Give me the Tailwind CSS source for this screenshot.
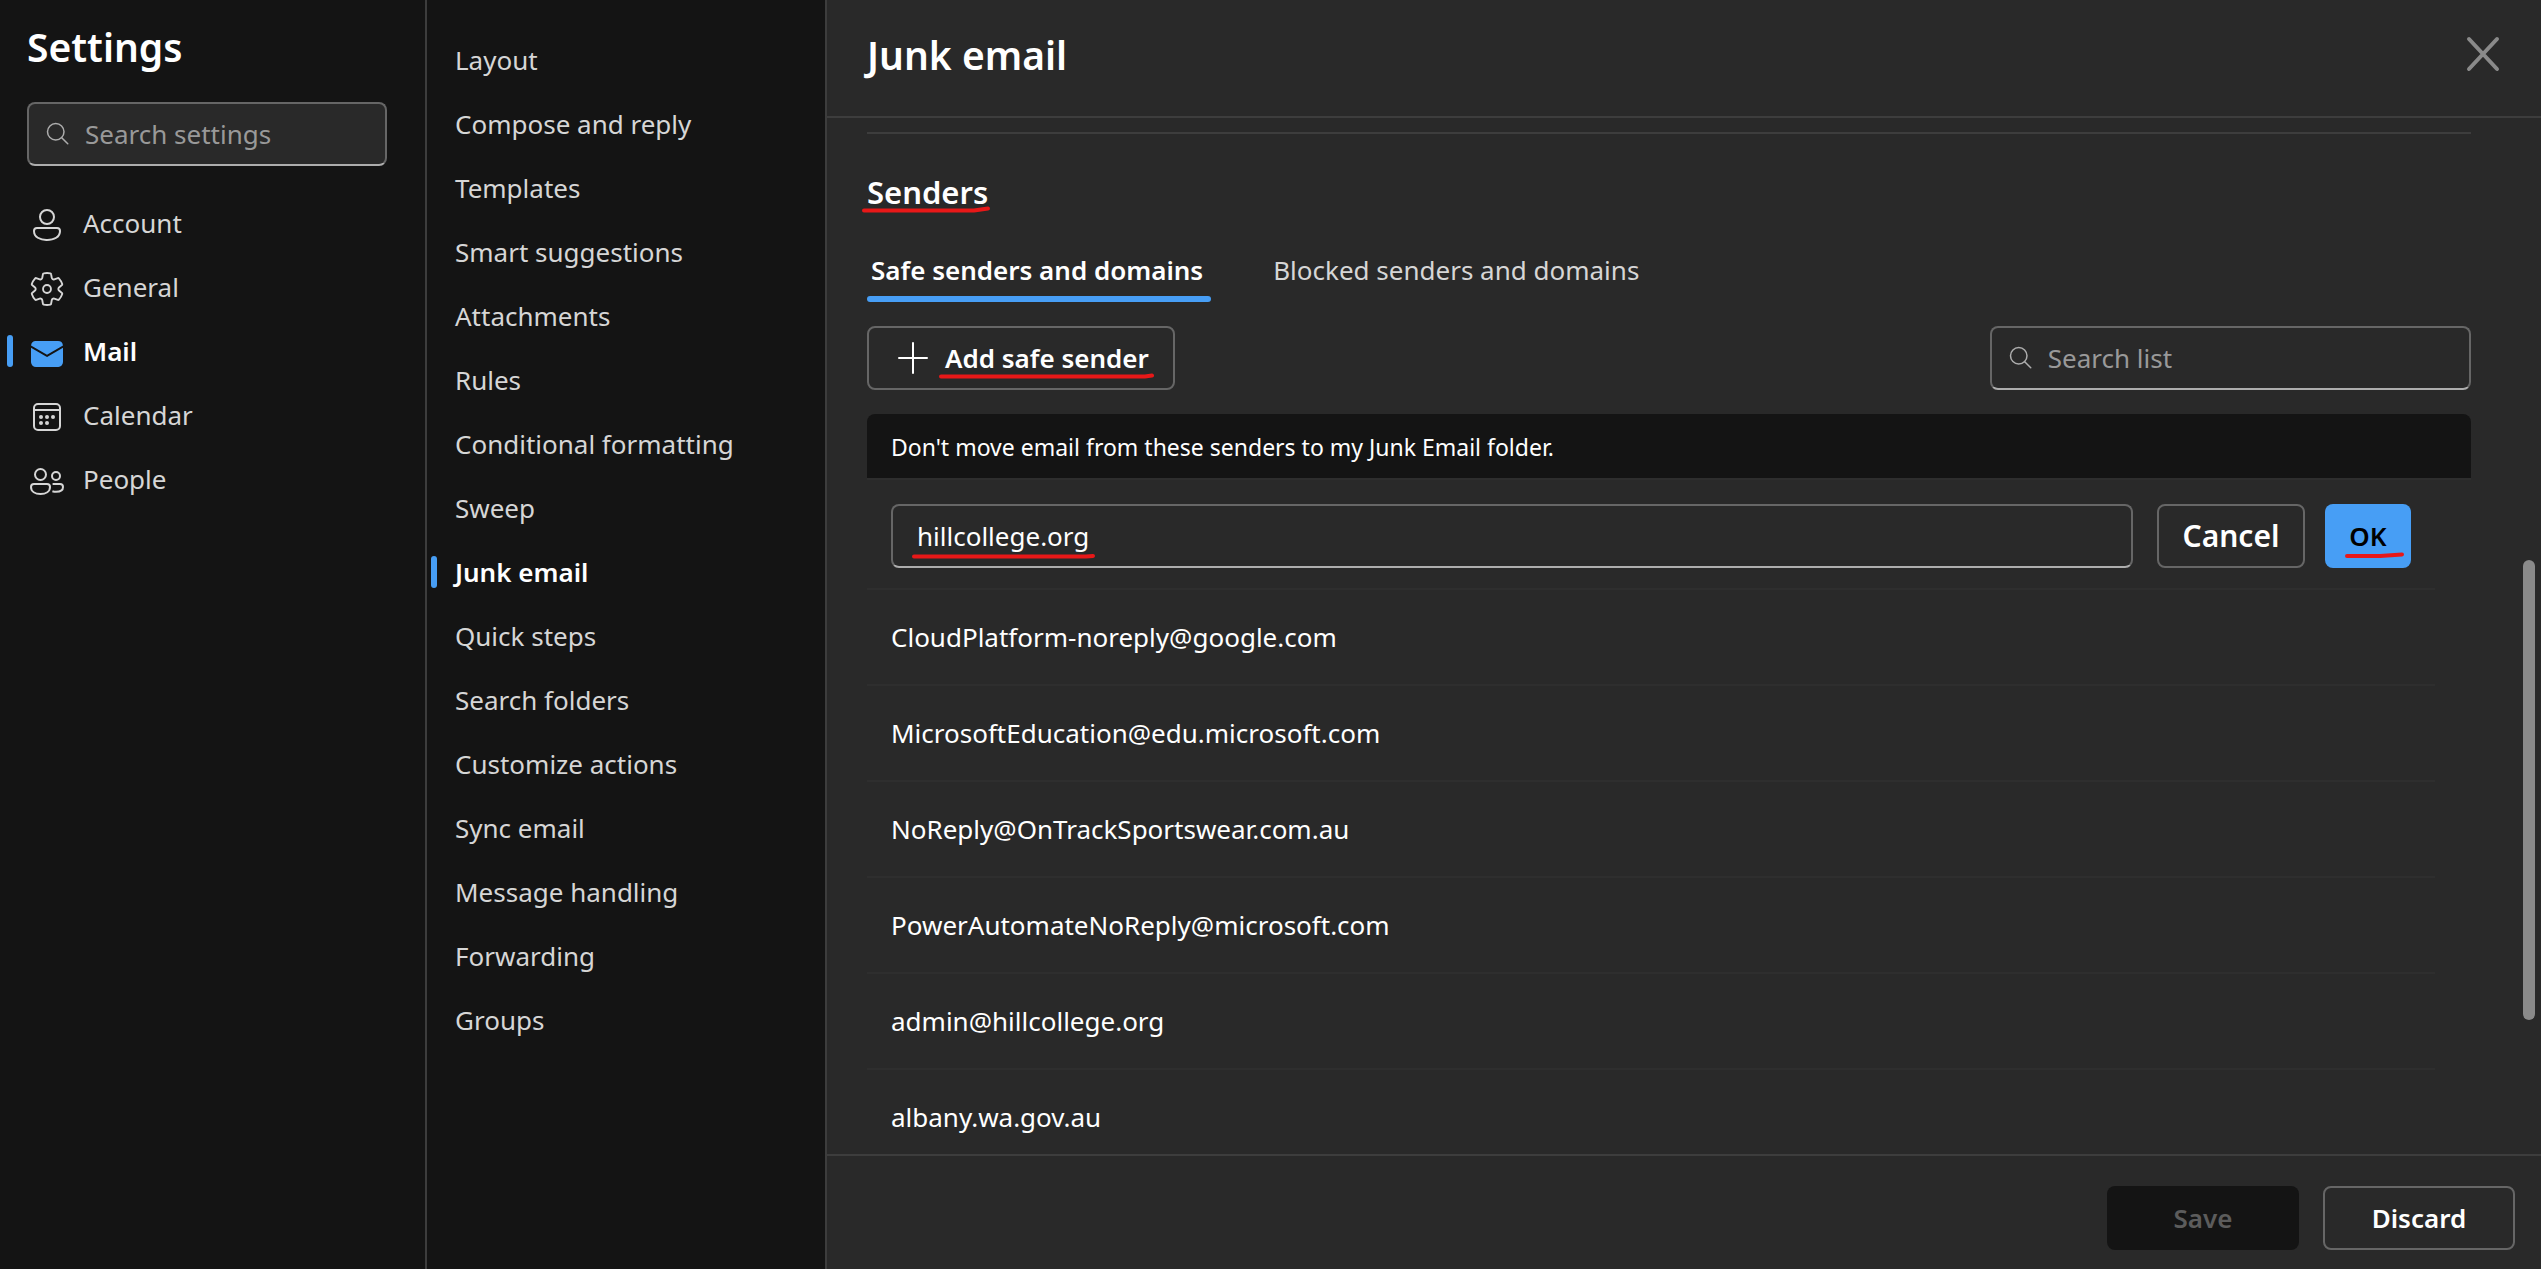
<!DOCTYPE html>
<html lang="en">
  <head>
    <meta charset="utf-8" />
    <title>Settings - Junk email</title>
    <script src="https://cdn.jsdelivr.net/npm/@tailwindcss/browser@4"></script>
  </head>
  <body
    class="flex h-screen overflow-hidden bg-[#292929] font-['Noto_Sans',sans-serif] text-[26px] leading-9 text-white"
  >
    <!-- Settings categories -->
    <aside class="w-[427px] shrink-0 border-r-2 border-[#3d3d3d] bg-[#141414]">
      <h1 class="px-[27px] pt-[22px] text-[39px] leading-[50px] font-semibold">Settings</h1>
      <div
        class="mt-[30px] mr-[38px] ml-[27px] flex h-16 items-center gap-3 rounded-lg border-2 border-[#666] border-b-[#adadad] bg-[#292929] px-[14px]"
      >
        <label for="search_settings">
          <svg class="size-[30px]" viewBox="0 0 20 20" fill="none" stroke="#adadad" stroke-linecap="round">
            <circle cx="8.5" cy="8.5" r="5.5" />
            <path d="M12.5 12.5l4 4" />
          </svg>
        </label>
        <input
          type="text"
          id="search_settings"
          aria-label="Search settings"
          placeholder="Search settings"
          class="h-full w-full min-w-0 bg-transparent outline-none placeholder:text-[#999]"
        />
      </div>
      <nav class="mt-[25px] text-[#d6d6d6]">
        <a href="#" class="flex h-16 items-center gap-4 pl-[27px]">
          <svg class="mt-1 size-10" viewBox="0 0 20 20" fill="currentColor">
            <path
              d="M10 2a4 4 0 1 0 0 8 4 4 0 0 0 0-8ZM7 6a3 3 0 1 1 6 0 3 3 0 0 1-6 0Zm-2 5a2 2 0 0 0-2 2c0 1.7.83 2.97 2.13 3.8A9.14 9.14 0 0 0 10 18c1.85 0 3.58-.39 4.87-1.2A4.35 4.35 0 0 0 17 13a2 2 0 0 0-2-2H5Zm-1 2a1 1 0 0 1 1-1h10a1 1 0 0 1 1 1c0 1.3-.62 2.28-1.67 2.95A8.16 8.16 0 0 1 10 17a8.16 8.16 0 0 1-4.33-1.05A3.36 3.36 0 0 1 4 13Z"
            />
          </svg>
          Account
        </a>
        <a href="#" class="flex h-16 items-center gap-4 pl-[27px]">
          <svg class="mt-1 size-10" viewBox="0 0 20 20" fill="none" stroke="currentColor">
            <g transform="translate(.6 .6) scale(.94)">
              <path
                d="M1.91 7.38A8.5 8.5 0 0 1 3.7 4.3a.5.5 0 0 1 .54-.13l1.92.68a1 1 0 0 0 1.32-.76l.36-2a.5.5 0 0 1 .4-.4 8.53 8.53 0 0 1 3.55 0c.2.04.35.2.38.4l.37 2a1 1 0 0 0 1.32.76l1.92-.68a.5.5 0 0 1 .54.13 8.5 8.5 0 0 1 1.78 3.08c.06.2 0 .4-.15.54l-1.56 1.32a1 1 0 0 0 0 1.52l1.56 1.32a.5.5 0 0 1 .15.54 8.5 8.5 0 0 1-1.78 3.08.5.5 0 0 1-.54.13l-1.92-.68a1 1 0 0 0-1.32.76l-.37 2a.5.5 0 0 1-.38.4 8.53 8.53 0 0 1-3.56 0 .5.5 0 0 1-.39-.4l-.36-2a1 1 0 0 0-1.32-.76l-1.92.68a.5.5 0 0 1-.54-.13 8.5 8.5 0 0 1-1.78-3.08.5.5 0 0 1 .15-.54l1.56-1.32a1 1 0 0 0 0-1.52L2.06 7.92a.5.5 0 0 1-.15-.54Z"
              />
              <circle cx="10" cy="10" r="2.1" />
            </g>
          </svg>
          General
        </a>
        <a href="#" class="flex h-16 items-center pl-[7px] font-semibold text-white">
          <span class="h-8 w-[6px] rounded-full bg-[#479ef5]"></span>
          <svg class="mt-1 mr-4 ml-[14px] size-10 text-[#479ef5]" viewBox="0 0 20 20" fill="currentColor">
            <path
              d="M18 7.37V14.5a2.5 2.5 0 0 1-2.34 2.5H4.5A2.5 2.5 0 0 1 2 14.66V7.37l7.75 4.56c.13.08.3.1.44.03l.06-.03L18 7.37ZM15.5 4a2.5 2.5 0 0 1 2.48 2.19L10 10.88 2.02 6.2A2.5 2.5 0 0 1 4.35 4H15.5Z"
            />
          </svg>
          Mail
        </a>
        <a href="#" class="flex h-16 items-center gap-4 pl-[27px]">
          <svg class="mt-1 size-10" viewBox="0 0 20 20" fill="none" stroke="currentColor">
            <rect x="3.5" y="3.5" width="13" height="13" rx="2" />
            <path d="M3.5 6.5h13" />
            <g fill="currentColor" stroke="none">
              <circle cx="7" cy="10" r="1" />
              <circle cx="10" cy="10" r="1" />
              <circle cx="13" cy="10" r="1" />
              <circle cx="7" cy="13" r="1" />
              <circle cx="10" cy="13" r="1" />
            </g>
          </svg>
          Calendar
        </a>
        <a href="#" class="flex h-16 items-center gap-4 pl-[27px]">
          <svg class="mt-1 size-10 overflow-visible" viewBox="0 0 20 20" fill="none" stroke="currentColor">
            <circle cx="6.75" cy="6.75" r="2.75" />
            <circle cx="14.5" cy="7.5" r="2" />
            <path d="M3.5 11.5H10a1.5 1.5 0 0 1 1.5 1.5c0 2.3-2.1 3.5-4.75 3.5S2 15.3 2 13a1.5 1.5 0 0 1 1.5-1.5Z" />
            <path d="M12.8 11.5h3.7a1.5 1.5 0 0 1 1.5 1.5c0 1.6-1.5 2.4-3.4 2.4-.7 0-1.3-.1-1.9-.3" />
          </svg>
          People
        </a>
      </nav>
    </aside>

    <!-- Mail sections -->
    <nav class="w-[400px] shrink-0 border-r-2 border-[#3d3d3d] bg-[#141414] pt-7 text-[#d6d6d6]">
      <a href="#" class="flex h-16 items-center pl-7">Layout</a>
      <a href="#" class="flex h-16 items-center pl-7">Compose and reply</a>
      <a href="#" class="flex h-16 items-center pl-7">Templates</a>
      <a href="#" class="flex h-16 items-center pl-7">Smart suggestions</a>
      <a href="#" class="flex h-16 items-center pl-7">Attachments</a>
      <a href="#" class="flex h-16 items-center pl-7">Rules</a>
      <a href="#" class="flex h-16 items-center pl-7">Conditional formatting</a>
      <a href="#" class="flex h-16 items-center pl-7">Sweep</a>
      <a href="#" class="flex h-16 items-center gap-[18px] pl-1 font-semibold text-white">
        <span class="h-8 w-[6px] rounded-full bg-[#479ef5]"></span>
        Junk email
      </a>
      <a href="#" class="flex h-16 items-center pl-7">Quick steps</a>
      <a href="#" class="flex h-16 items-center pl-7">Search folders</a>
      <a href="#" class="flex h-16 items-center pl-7">Customize actions</a>
      <a href="#" class="flex h-16 items-center pl-7">Sync email</a>
      <a href="#" class="flex h-16 items-center pl-7">Message handling</a>
      <a href="#" class="flex h-16 items-center pl-7">Forwarding</a>
      <a href="#" class="flex h-16 items-center pl-7">Groups</a>
    </nav>

    <!-- Junk email pane -->
    <main class="flex min-w-0 flex-1 flex-col">
      <header class="flex items-center justify-between border-b-2 border-[#3d3d3d] pt-[30px] pr-[38px] pb-9 pl-10">
        <h2 class="text-[39px] leading-[50px] font-semibold">Junk email</h2>
        <button type="button" aria-label="Close">
          <svg class="size-10" viewBox="0 0 40 40" stroke="#8a8a8a" stroke-width="4" stroke-linecap="round">
            <path d="M6 4l28 30M34 4L6 34" />
          </svg>
        </button>
      </header>

      <section class="relative min-h-0 flex-1 overflow-hidden pt-[14px] pr-[70px] pl-10">
        <hr class="border-t-2 border-[#3d3d3d]" />
        <h3 class="relative mt-9 w-fit text-[31px] leading-[44px] font-semibold">
          Senders
          <svg class="absolute top-[36px] -left-[5px] h-2 w-[130px]" viewBox="0 0 130 8" fill="none" stroke="#e81818" stroke-width="4" stroke-linecap="round" stroke-linejoin="round">
            <path d="M2 4.5H112L126 2.5" />
          </svg>
        </h3>

        <div class="mt-[38px] flex gap-[58px]">
          <button type="button" class="font-semibold">
            <span class="block pr-2 pb-2 pl-1">Safe senders and domains</span>
            <span class="block h-[6px] rounded-full bg-[#479ef5]"></span>
          </button>
          <button type="button" class="px-1 pb-[14px] text-[#d6d6d6]">Blocked senders and domains</button>
        </div>

        <div class="mt-6 flex items-center justify-between">
          <button
            type="button"
            class="flex h-16 items-center gap-3 rounded-lg border-2 border-[#666] px-6 font-semibold"
          >
            <svg class="size-10" viewBox="0 0 40 40" stroke="white" stroke-width="2" stroke-linecap="round">
              <path d="M20 5v30M6 20h28" />
            </svg>
            <span class="relative">
              Add safe sender
              <svg class="absolute top-[32px] -left-[6px] h-2 w-[216px]" viewBox="0 0 216 8" fill="none" stroke="#e81818" stroke-width="4" stroke-linecap="round">
                <path d="M2 4.5H206L213 3.5" />
              </svg>
            </span>
          </button>
          <div
            class="flex h-16 w-[30%] items-center gap-3 rounded-lg border-2 border-[#666] border-b-[#adadad] px-[14px]"
          >
            <label for="search_list">
              <svg class="size-[30px]" viewBox="0 0 20 20" fill="none" stroke="#adadad" stroke-linecap="round">
                <circle cx="8.5" cy="8.5" r="5.5" />
                <path d="M12.5 12.5l4 4" />
              </svg>
            </label>
            <input
              type="text"
              id="search_list"
              aria-label="Search list"
              placeholder="Search list"
              class="h-full w-full min-w-0 bg-transparent outline-none placeholder:text-[#999]"
            />
          </div>
        </div>

        <div class="mt-6 rounded-t-lg border-b-2 border-[#2e2e2e] bg-[#141414] px-6 pt-[15px] pb-[13px] text-[23px]">
          Don't move email from these senders to my Junk Email folder.
        </div>

        <div class="mr-9 flex items-center border-b-2 border-[#2e2e2e] px-6 pt-6 pb-5">
          <div class="relative flex-1">
            <input
              type="text"
              aria-label="Safe sender or domain"
              value="hillcollege.org"
              class="h-16 w-full rounded-lg border-2 border-[#666] border-b-[#adadad] bg-transparent px-6 outline-none"
            />
            <svg class="absolute top-[48px] left-[21px] h-2 w-[184px]" viewBox="0 0 184 8" fill="none" stroke="#e81818" stroke-width="4" stroke-linecap="round">
              <path d="M2 4.5H174L181 4" />
            </svg>
          </div>
          <button type="button" class="ml-6 h-16 w-[148px] rounded-lg border-2 border-[#666] text-[30px] font-semibold">
            Cancel
          </button>
          <button type="button" class="relative ml-5 h-16 w-[86px] rounded-lg bg-[#479ef5] font-semibold text-black">
            OK
            <svg class="absolute top-[47px] left-5 h-2 w-[60px]" viewBox="0 0 60 8" fill="none" stroke="#e81818" stroke-width="4" stroke-linecap="round" stroke-linejoin="round">
              <path d="M2 5H35L57 3.5" />
            </svg>
          </button>
        </div>

        <ul class="mr-9">
          <li class="flex h-24 items-center border-b-2 border-[#2e2e2e] px-6">CloudPlatform-noreply@google.com</li>
          <li class="flex h-24 items-center border-b-2 border-[#2e2e2e] px-6">MicrosoftEducation@edu.microsoft.com</li>
          <li class="flex h-24 items-center border-b-2 border-[#2e2e2e] px-6">NoReply@OnTrackSportswear.com.au</li>
          <li class="flex h-24 items-center border-b-2 border-[#2e2e2e] px-6">PowerAutomateNoReply@microsoft.com</li>
          <li class="flex h-24 items-center border-b-2 border-[#2e2e2e] px-6">admin@hillcollege.org</li>
          <li class="flex h-24 items-center border-b-2 border-[#2e2e2e] px-6">albany.wa.gov.au</li>
        </ul>

        <!-- Scroll thumb -->
        <div class="absolute top-[442px] right-[6px] h-[460px] w-3 rounded-full bg-[#8a8a8a]"></div>
      </section>

      <footer class="flex justify-end gap-6 border-t-2 border-[#3d3d3d] pt-[30px] pr-[26px] pb-[19px]">
        <button type="button" disabled class="h-16 w-48 rounded-lg bg-[#141414] font-semibold text-[#5c5c5c]">Save</button>
        <button type="button" class="h-16 w-48 rounded-lg border-2 border-[#666] font-semibold">Discard</button>
      </footer>
    </main>
  </body>
</html>
